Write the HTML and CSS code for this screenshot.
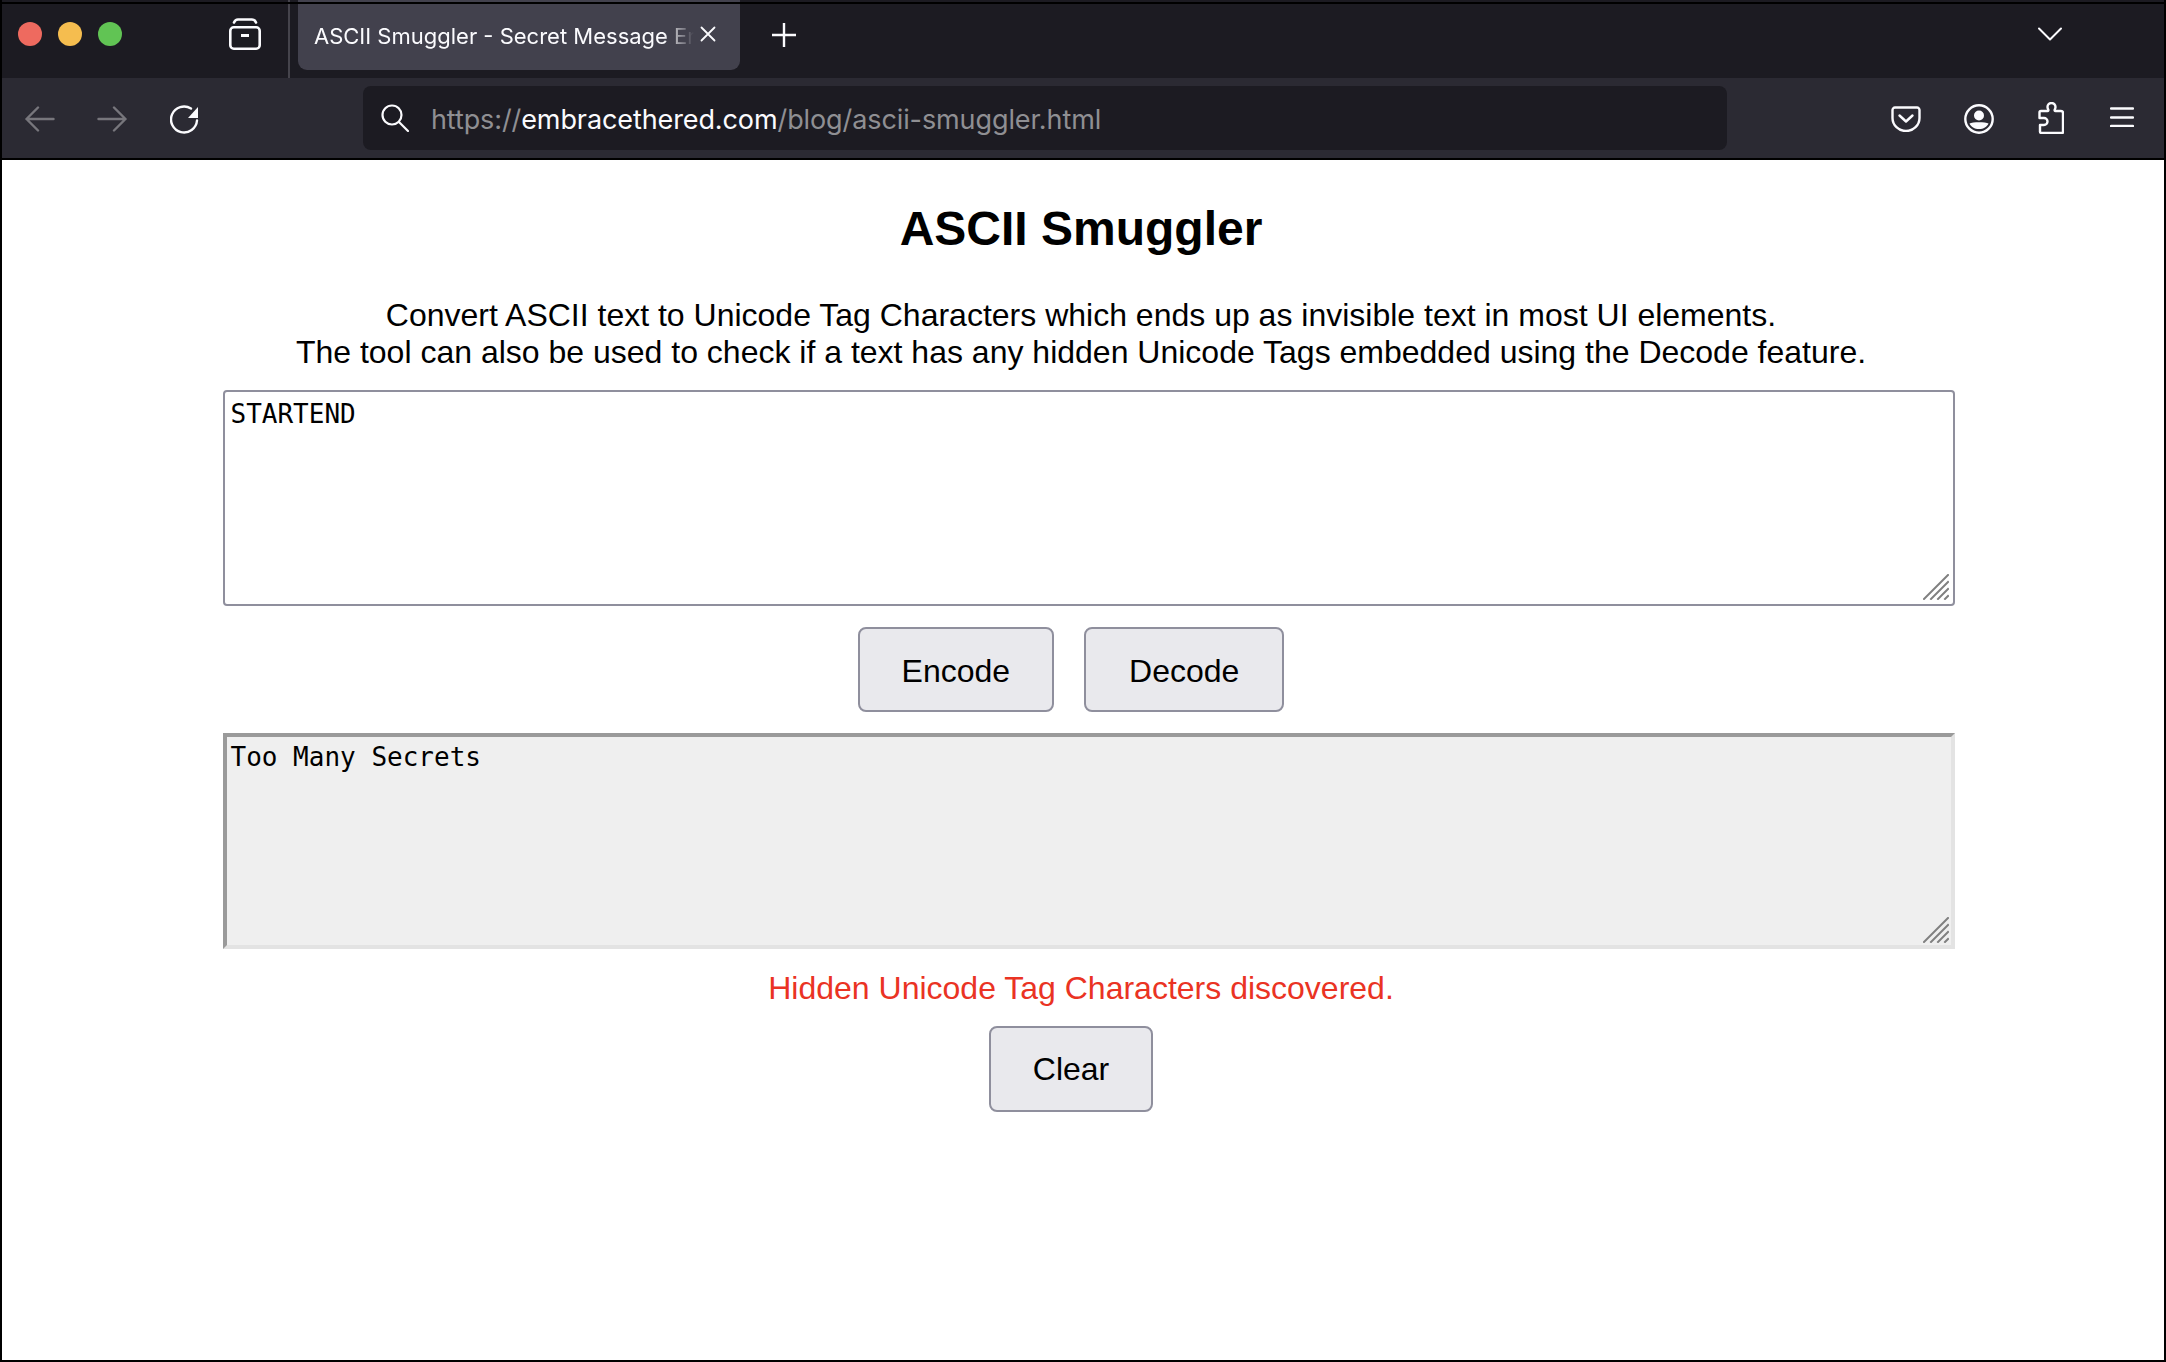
FILE: index.html
```html
<!DOCTYPE html>
<html lang="en">
<head>
<meta charset="utf-8">
<title>ASCII Smuggler</title>
<link rel="stylesheet" href="styles.css">
</head>
<body>
<div class="window">
  <header class="tabbar">
    <div class="lights">
      <span class="light red"></span>
      <span class="light yellow"></span>
      <span class="light green"></span>
    </div>
    <svg class="ico-archive" width="32" height="32" viewBox="0 0 32 32" fill="none" stroke="#fbfbfe" stroke-width="2.6">
      <path d="M5 4.500c.8-2 2-3 4-3h14c2 0 3.200 1 4 3" stroke-linecap="round"/>
      <rect x="1.300" y="9.300" width="29.400" height="21.400" rx="3.500"/>
      <path d="M12 17.500h8" stroke-width="3"/>
    </svg>
    <span class="divider"></span>
    <div class="tab">
      <span class="tab-title">ASCII Smuggler - Secret Message Encoder</span>
      <svg class="tab-close" width="16" height="16" viewBox="0 0 16 16" stroke="#fbfbfe" stroke-width="1.800" stroke-linecap="round"><path d="M1.500 1.500l13 13M14.500 1.500l-13 13"/></svg>
    </div>
    <svg class="ico-plus" width="24" height="24" viewBox="0 0 24 24" stroke="#fbfbfe" stroke-width="2.400"><path d="M12 0v24M0 12h24"/></svg>
    <svg class="ico-chevron" width="24" height="14" viewBox="0 0 24 14" fill="none" stroke="#fbfbfe" stroke-width="2" stroke-linecap="round" stroke-linejoin="round"><path d="M1 1.500l11 11 11-11"/></svg>
  </header>
  <nav class="toolbar">
    <svg class="ico-back" width="30" height="26" viewBox="0 0 30 26" fill="none" stroke="#77767c" stroke-width="2.400" stroke-linecap="round" stroke-linejoin="round"><path d="M1.500 13h27M13 1.500L1.500 13 13 24.500"/></svg>
    <svg class="ico-forward" width="30" height="26" viewBox="0 0 30 26" fill="none" stroke="#77767c" stroke-width="2.400" stroke-linecap="round" stroke-linejoin="round"><path d="M1.500 13h27M17 1.500L28.500 13 17 24.500"/></svg>
    <svg class="ico-reload" width="30" height="30" viewBox="0 0 30 30" fill="none"><path d="M21 3.500A13 13 0 1 0 27 15.500" stroke="#fbfbfe" stroke-width="2.400" stroke-linecap="round"/><path d="M28 2v11H18z" fill="#fbfbfe"/></svg>
    <div class="urlbar">
      <svg class="ico-search" width="28" height="28" viewBox="0 0 28 28" fill="none" stroke="#fbfbfe" stroke-width="2.200" stroke-linecap="round"><circle cx="11" cy="11" r="9.500"/><path d="M18 18l9 9"/></svg>
      <span class="url"><span class="dim">https://</span>embracethered.com<span class="dim">/blog/ascii-smuggler.html</span></span>
    </div>
    <svg class="ico-pocket" width="30" height="26" viewBox="0 0 30 26" fill="none" stroke="#fbfbfe" stroke-width="2.400" stroke-linecap="round" stroke-linejoin="round"><path d="M4 1.500h22a2.500 2.500 0 0 1 2.500 2.500v8a13.500 13 0 0 1-27 0V4A2.500 2.500 0 0 1 4 1.500z"/><path d="M8.500 9.500l6.500 6 6.500-6"/></svg>
    <svg class="ico-account" width="30" height="30" viewBox="0 0 30 30" fill="none"><circle cx="15" cy="15" r="13.700" stroke="#fbfbfe" stroke-width="2.400"/><circle cx="15" cy="11.500" r="5" fill="#fbfbfe"/><path d="M5.500 19.500c3-1.800 16-1.800 19 0-1.500 3.500-5 5.500-9.500 5.500s-8-2-9.500-5.500z" fill="#fbfbfe"/></svg>
    <svg class="ico-puzzle" width="26" height="32" viewBox="0 0 26 32" fill="none" stroke="#fbfbfe" stroke-width="2.400" stroke-linejoin="round"><path d="M3 31h21a1 1 0 0 0 1-1V11a2 2 0 0 0-2-2h-5.500c-.8 0-1-.6-.8-1.300.5-1 .8-1.600.8-2.700a4 4 0 0 0-8 0c0 1.100.3 1.700.8 2.700.2.700 0 1.300-.8 1.300H3a1.500 1.500 0 0 0-1.500 1.500V16h4.500a3.500 3.500 0 0 1 0 7H2v6.500A1.500 1.500 0 0 0 3 31z"/></svg>
    <svg class="ico-menu" width="24" height="20" viewBox="0 0 24 20" stroke="#fbfbfe" stroke-width="2.400" stroke-linecap="round"><path d="M1 1.500h22M1 10.500h22M1 19h22"/></svg>
  </nav>
  <main class="page">
    <h1 class="title">ASCII Smuggler</h1>
    <p class="intro">Convert ASCII text to Unicode Tag Characters which ends up as invisible text in most UI elements.<br>The tool can also be used to check if a text has any hidden Unicode Tags embedded using the Decode feature.</p>
    <div class="field">
      <textarea class="box box-input" spellcheck="false">STARTEND</textarea>
      <svg class="grip" width="26" height="26" viewBox="0 0 26 26" stroke="#808080" stroke-width="2" stroke-linecap="square"><path d="M1 25L25 1M8 25L25 8M15 25L25 15M22 25l3-3"/></svg>
    </div>
    <div class="actions">
      <button class="btn btn-encode" type="button">Encode</button>
      <button class="btn btn-decode" type="button">Decode</button>
    </div>
    <div class="field">
      <textarea class="box box-output" readonly spellcheck="false">Too Many Secrets</textarea>
      <svg class="grip" width="26" height="26" viewBox="0 0 26 26" stroke="#808080" stroke-width="2" stroke-linecap="square"><path d="M1 25L25 1M8 25L25 8M15 25L25 15M22 25l3-3"/></svg>
    </div>
    <p class="status">Hidden Unicode Tag Characters discovered.</p>
    <div class="actions actions-clear">
      <button class="btn btn-clear" type="button">Clear</button>
    </div>
  </main>
</div>
</body>
</html>
```
FILE: styles.css
```css
* { box-sizing: border-box; }
html, body { margin: 0; height: 100%; background: #000; }
body { overflow: hidden; }

.window {
  width: 2166px;
  height: 1362px;
  display: flex;
  flex-direction: column;
  padding: 0 2px 2px;
  background: #000;
}

.tabbar {
  position: relative;
  height: 78px;
  flex: none;
  display: flex;
  align-items: flex-start;
  background: #1c1b22;
  color: #fbfbfe;
  font-family: Inter, "Liberation Sans", sans-serif;
}
.tabbar::after {
  content: "";
  position: absolute;
  left: 0;
  right: 0;
  top: 2px;
  height: 2px;
  background: #000;
}
.lights { display: flex; gap: 16px; margin: 22px 0 0 16px; }
.light { width: 24px; height: 24px; border-radius: 50%; }
.red { background: #ee6a5f; }
.yellow { background: #f5bd4f; }
.green { background: #61c454; }
.ico-archive { margin: 18px 0 0 107px; }
.divider { width: 2px; height: 78px; margin-left: 27px; background: #45444c; }
.tab {
  width: 442px;
  height: 70px;
  margin: 0 0 0 8px;
  display: flex;
  align-items: center;
  padding: 1px 21px 0 16px;
  background: #42414d;
  border-radius: 0 0 9px 9px;
}
.tab-title {
  width: 380px;
  overflow: hidden;
  white-space: nowrap;
  font-size: 22px;
  -webkit-mask-image: linear-gradient(90deg, #000 92%, transparent);
  mask-image: linear-gradient(90deg, #000 92%, transparent);
}
.tab-close { margin-left: 6px; margin-top: -4px; }
.ico-plus { margin: 23px 0 0 32px; }
.ico-chevron { margin: 27px 0 0 1242px; }

.toolbar {
  height: 80px;
  flex: none;
  display: flex;
  align-items: center;
  background: #2b2a33;
  font-family: Inter, "Liberation Sans", sans-serif;
}
.ico-back { margin-left: 23px; margin-top: 2px; }
.ico-forward { margin-left: 42px; margin-top: 2px; }
.ico-reload { margin-left: 43px; margin-top: 4px; }
.urlbar {
  width: 1364px;
  height: 64px;
  margin-left: 163px;
  display: flex;
  align-items: center;
  padding-left: 18px;
  background: #1c1b22;
  border-radius: 8px;
}
.url {
  margin: 2px 0 0 22px;
  font-size: 27px;
  letter-spacing: -0.1px;
  color: #fbfbfe;
  white-space: nowrap;
}
.dim { color: #8f8f93; }
.ico-pocket { margin-left: 164px; margin-top: 1px; }
.ico-account { margin-left: 43px; margin-top: 1px; }
.ico-puzzle { margin-left: 44px; }
.ico-menu { margin-left: 46px; margin-top: -2px; }

.page {
  flex: 1;
  margin-top: 2px;
  background: #fff;
  padding: 0 209px 0 221px;
  font-family: "Liberation Sans", Arial, sans-serif;
  color: #000;
  text-align: center;
}
.title { margin: 41px 16px 0 0; font-size: 48px; line-height: 56px; font-weight: 700; }
.intro { margin: 40px 16px 0 0; font-size: 32px; line-height: 37px; }
.field { position: relative; height: 216px; margin-top: 19px; }
.box {
  display: block;
  width: 100%;
  height: 100%;
  resize: none;
  margin: 0;
  outline: none;
  padding: 7px 5.5px;
  font-family: "DejaVu Sans Mono", monospace;
  font-size: 26px;
  line-height: 30px;
  color: #000;
}
.box-input { background: #fff; border: 2px solid #8f8f9d; border-radius: 4px; }
.box-output {
  background: #efefef;
  border: 4px solid;
  border-color: #9a9a9a #e3e3e3 #e3e3e3 #9a9a9a;
  padding: 5px 3.5px;
}
.grip { position: absolute; right: 6px; bottom: 6px; }
.actions { display: flex; justify-content: center; gap: 30px; margin: 21px 0; padding-right: 36px; }
.actions-clear { margin: 0; }
.btn {
  height: 85px;
  padding: 3px 42px 0;
  background: #e9e9ed;
  border: 2px solid #8f8f9d;
  border-radius: 8px;
  font-family: "Liberation Sans", Arial, sans-serif;
  font-size: 32px;
  color: #000;
}
.btn-decode { padding: 3px 43px 0; }
.btn-clear { height: 86px; padding-top: 1px; }
.status { margin: 21px 16px 19px 0; font-size: 32px; line-height: 37px; color: #ea3323; }
```
